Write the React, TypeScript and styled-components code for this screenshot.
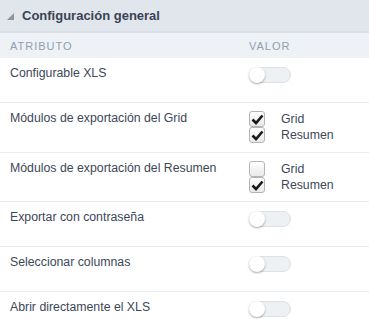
import React from 'react';
import styled, {createGlobalStyle} from "styled-components";

const GlobalStyle = createGlobalStyle`
  html, body {
    margin: 0;
    padding: 0;
    background: #fff;
    font-family: "Liberation Sans", Arial, sans-serif;
  }
`;

const Panel = styled.div`
  width: 369px;
  height: 319px;
  overflow: hidden;
  background: #fff;
`;

const PanelHeader = styled.div`
  height: 31px;
  display: flex;
  align-items: center;
  gap: 8px;
  padding-left: 7px;
  background: #e1e6ec;
  border-bottom: 2px solid #d9dfe6;
`;

const Caret = styled.span`
  width: 0;
  height: 0;
  border-left: 7px solid transparent;
  border-bottom: 7px solid #8a96a3;
  margin-top: 1px;
`;

const Title = styled.span`
  font-size: 13px;
  font-weight: bold;
  color: #3a4354;
`;

const Row = styled.div<{ $h: number; $head?: boolean }>`
  display: grid;
  grid-template-columns: 239px 1fr;
  height: ${p => p.$h}px;
  box-sizing: border-box;
  background: ${p => (p.$head ? '#eef1f5' : '#fff')};
  border-bottom: ${p => (p.$head ? 'none' : '1px solid #e9edf1')};
`;

const HeadCell = styled.div`
  padding: 0 10px;
  display: flex;
  align-items: center;
  font-size: 11px;
  letter-spacing: 1px;
  color: #8ea0b1;
  text-transform: uppercase;
`;

const Cell = styled.div`
  padding: 7px 10px 0;
  font-size: 12.3px;
  line-height: 17px;
  color: #3d4759;
`;

const Track = styled.div`
  position: relative;
  width: 40px;
  height: 14px;
  margin-top: 2px;
  border: 1px solid #dbe1e6;
  border-radius: 8px;
  background: #eef1f4;
`;

const Knob = styled.div`
  position: absolute;
  left: -1px;
  top: -1px;
  width: 16px;
  height: 16px;
  border-radius: 50%;
  background: #fff;
  box-shadow: 0 1px 2px rgba(0, 0, 0, 0.35);
`;

const CheckList = styled.div`
  display: flex;
  flex-direction: column;
  margin-top: 1px;
`;

const CheckLine = styled.label`
  display: flex;
  align-items: center;
  height: 16px;
  gap: 16px;
  font-size: 12.3px;
  color: #3d4759;
`;

const Box = styled.span`
  width: 14px;
  height: 14px;
  border: 1px solid #b4b4b4;
  border-radius: 3px;
  background: linear-gradient(#ffffff, #e9e9e9);
  display: flex;
  align-items: center;
  justify-content: center;
`;

const Toggle = () => (
    <Track>
        <Knob/>
    </Track>
);

const Check = ({checked, label}: { checked: boolean; label: string }) => (
    <CheckLine>
        <Box>
            {checked &&
            <svg width="13" height="11" viewBox="0 0 13 11">
                <path d="M1.5 5.5 L5 9 L11.5 1.5" fill="none" stroke="#1a1a1a" strokeWidth="2.6"/>
            </svg>}
        </Box>
        {label}
    </CheckLine>
);

const rows = [
    {label: 'Configurable XLS', h: 45, kind: 'toggle'},
    {label: 'Módulos de exportación del Grid', h: 50, kind: 'check', checks: [true, true]},
    {label: 'Módulos de exportación del Resumen', h: 49, kind: 'check', checks: [false, true]},
    {label: 'Exportar con contraseña', h: 45, kind: 'toggle'},
    {label: 'Seleccionar columnas', h: 45, kind: 'toggle'},
    {label: 'Abrir directamente el XLS', h: 45, kind: 'toggle'},
];

const App = () => {
    return (
        <Panel>
            <GlobalStyle/>
            <PanelHeader>
                <Caret/>
                <Title>Configuración general</Title>
            </PanelHeader>
            <Row $h={25} $head>
                <HeadCell>Atributo</HeadCell>
                <HeadCell>Valor</HeadCell>
            </Row>
            {rows.map((r, i) => (
                <Row key={i} $h={r.h}>
                    <Cell>{r.label}</Cell>
                    <Cell>
                        {r.kind === 'toggle' ? <Toggle/> :
                            <CheckList>
                                <Check checked={r.checks![0]} label="Grid"/>
                                <Check checked={r.checks![1]} label="Resumen"/>
                            </CheckList>
                        }
                    </Cell>
                </Row>
            ))}
        </Panel>
    );
};

export default App;
